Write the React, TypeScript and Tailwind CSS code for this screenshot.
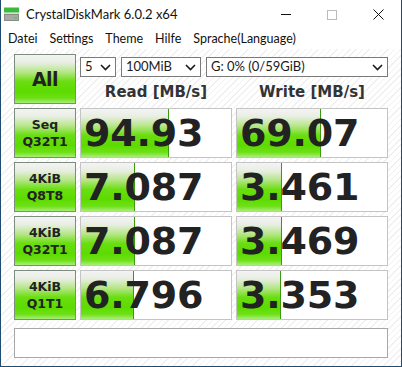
import React from "react";

interface Result {
  label: string[];
  read: string;
  write: string;
  readFill: number;
  writeFill: number;
}

const results: Result[] = [
  { label: ["Seq", "Q32T1"], read: "94.93", write: "69.07", readFill: 88, writeFill: 84 },
  { label: ["4KiB", "Q8T8"], read: "7.087", write: "3.461", readFill: 54, writeFill: 45 },
  { label: ["4KiB", "Q32T1"], read: "7.087", write: "3.469", readFill: 54, writeFill: 45 },
  { label: ["4KiB", "Q1T1"], read: "6.796", write: "3.353", readFill: 53, writeFill: 44 },
];

const green =
  "bg-[linear-gradient(to_bottom,#f4f4f4_0%,#e8eee2_16%,#b4e684_36%,#6ade10_55%,#5cdb00_76%,#6ee016_90%,#a8ee78_100%)]";

const Chevron = () => (
  <svg width="11" height="7" viewBox="0 0 11 7" className="shrink-0">
    <path d="M1 1 L5.5 5.5 L10 1" fill="none" stroke="#1a1a1a" strokeWidth="1.6" />
  </svg>
);

const Select = ({ text, w }: { text: string; w: string }) => (
  <div
    className={`${w} h-[20px] flex items-center justify-between border border-[#7a7a7a] bg-white pl-[4px] pr-[4px] text-[13px] text-[#1a1a1a]`}
  >
    <span>{text}</span>
    <Chevron />
  </div>
);

const Bar = ({ value, fill }: { value: string; fill: number }) => (
  <div className="relative h-[50px] border border-[#c4c4c4] bg-white overflow-hidden">
    <div
      className={`absolute left-0 top-0 bottom-0 border-r border-[#3d9a10] ${green}`}
      style={{ width: fill }}
    />
    <div className="relative h-full flex items-center pl-[3px] font-['DejaVu_Sans',sans-serif] font-bold text-[38px] text-[#222] leading-none tracking-[-0.2px]">
      {value}
    </div>
  </div>
);

const GreenButton = ({ children, big }: { children: React.ReactNode; big?: boolean }) => (
  <div
    className={`h-[50px] flex flex-col items-center justify-center border border-[#7d8d7d] ${green} font-['DejaVu_Sans',sans-serif] font-bold text-[#222] leading-[17px] ${
      big ? "text-[19px] tracking-[-0.5px]" : "text-[12.5px]"
    }`}
  >
    {children}
  </div>
);

export default function App() {
  return (
    <div className="w-[402px] h-[367px] flex flex-col bg-white border-x border-b border-[#1d4b72] font-['Lato','Noto_Sans',sans-serif] overflow-hidden">
      {/* title bar */}
      <div className="h-[29px] flex items-center shrink-0">
        <svg width="16" height="15" viewBox="0 0 16 15" className="ml-[3px] mr-[6px]">
          <rect x="0" y="0.5" width="15" height="5" fill="#3cb83c" />
          <rect x="0" y="5.5" width="15" height="1" fill="#8fd48f" />
          <rect x="0" y="7" width="15" height="7" fill="#8a8a8a" />
          <rect x="1" y="8" width="13" height="5" fill="#a8a8a8" />
          <rect x="10" y="10" width="3" height="1.5" fill="#4ad04a" />
        </svg>
        <span className="text-[13px] text-[#111]">CrystalDiskMark 6.0.2 x64</span>
        <div className="ml-auto flex items-center h-full">
          <div className="w-[46px] flex justify-center">
            <div className="w-[10px] h-px bg-[#111]" />
          </div>
          <div className="w-[46px] flex justify-center">
            <div className="w-[10px] h-[10px] border border-[#bbb]" />
          </div>
          <div className="w-[46px] flex justify-center">
            <svg width="11" height="11" viewBox="0 0 11 11">
              <path d="M0.5 0.5 L10.5 10.5 M10.5 0.5 L0.5 10.5" stroke="#111" strokeWidth="1" />
            </svg>
          </div>
        </div>
      </div>
      {/* menu bar */}
      <div className="h-[20px] flex items-center text-[12.5px] text-[#111] shrink-0 pl-[7px] gap-[12px]">
        <span>Datei</span>
        <span>Settings</span>
        <span>Theme</span>
        <span>Hilfe</span>
        <span>Sprache(Language)</span>
      </div>
      {/* content */}
      <div className="flex-1 bg-[repeating-linear-gradient(135deg,#ffffff_0px,#ffffff_3.5px,#f0f0f0_3.5px,#f0f0f0_4.5px)] pl-[13px] pt-[5px]">
        <div className="grid grid-cols-[62px_152px_152px] gap-[4px]">
          <GreenButton big>All</GreenButton>
          <div className="col-span-2 flex flex-col">
            <div className="flex mt-[3px]">
              <Select text="5" w="w-[36px]" />
              <Select text="100MiB" w="w-[80px] ml-[5px]" />
              <Select text="G: 0% (0/59GiB)" w="w-[182px] ml-[5px]" />
            </div>
            <div className="grid grid-cols-2 gap-[4px] mt-[5px] font-['DejaVu_Sans',sans-serif] font-bold text-[15px] text-[#333] text-center leading-[20px]">
              <span>Read [MB/s]</span>
              <span>Write [MB/s]</span>
            </div>
          </div>
          {results.map((r, i) => (
            <React.Fragment key={i}>
              <GreenButton>
                <span>{r.label[0]}</span>
                <span>{r.label[1]}</span>
              </GreenButton>
              <Bar value={r.read} fill={r.readFill} />
              <Bar value={r.write} fill={r.writeFill} />
            </React.Fragment>
          ))}
        </div>
        <div className="mt-[8px] w-[374px] h-[30px] border border-[#a8a8a8] bg-white" />
      </div>
    </div>
  );
}
